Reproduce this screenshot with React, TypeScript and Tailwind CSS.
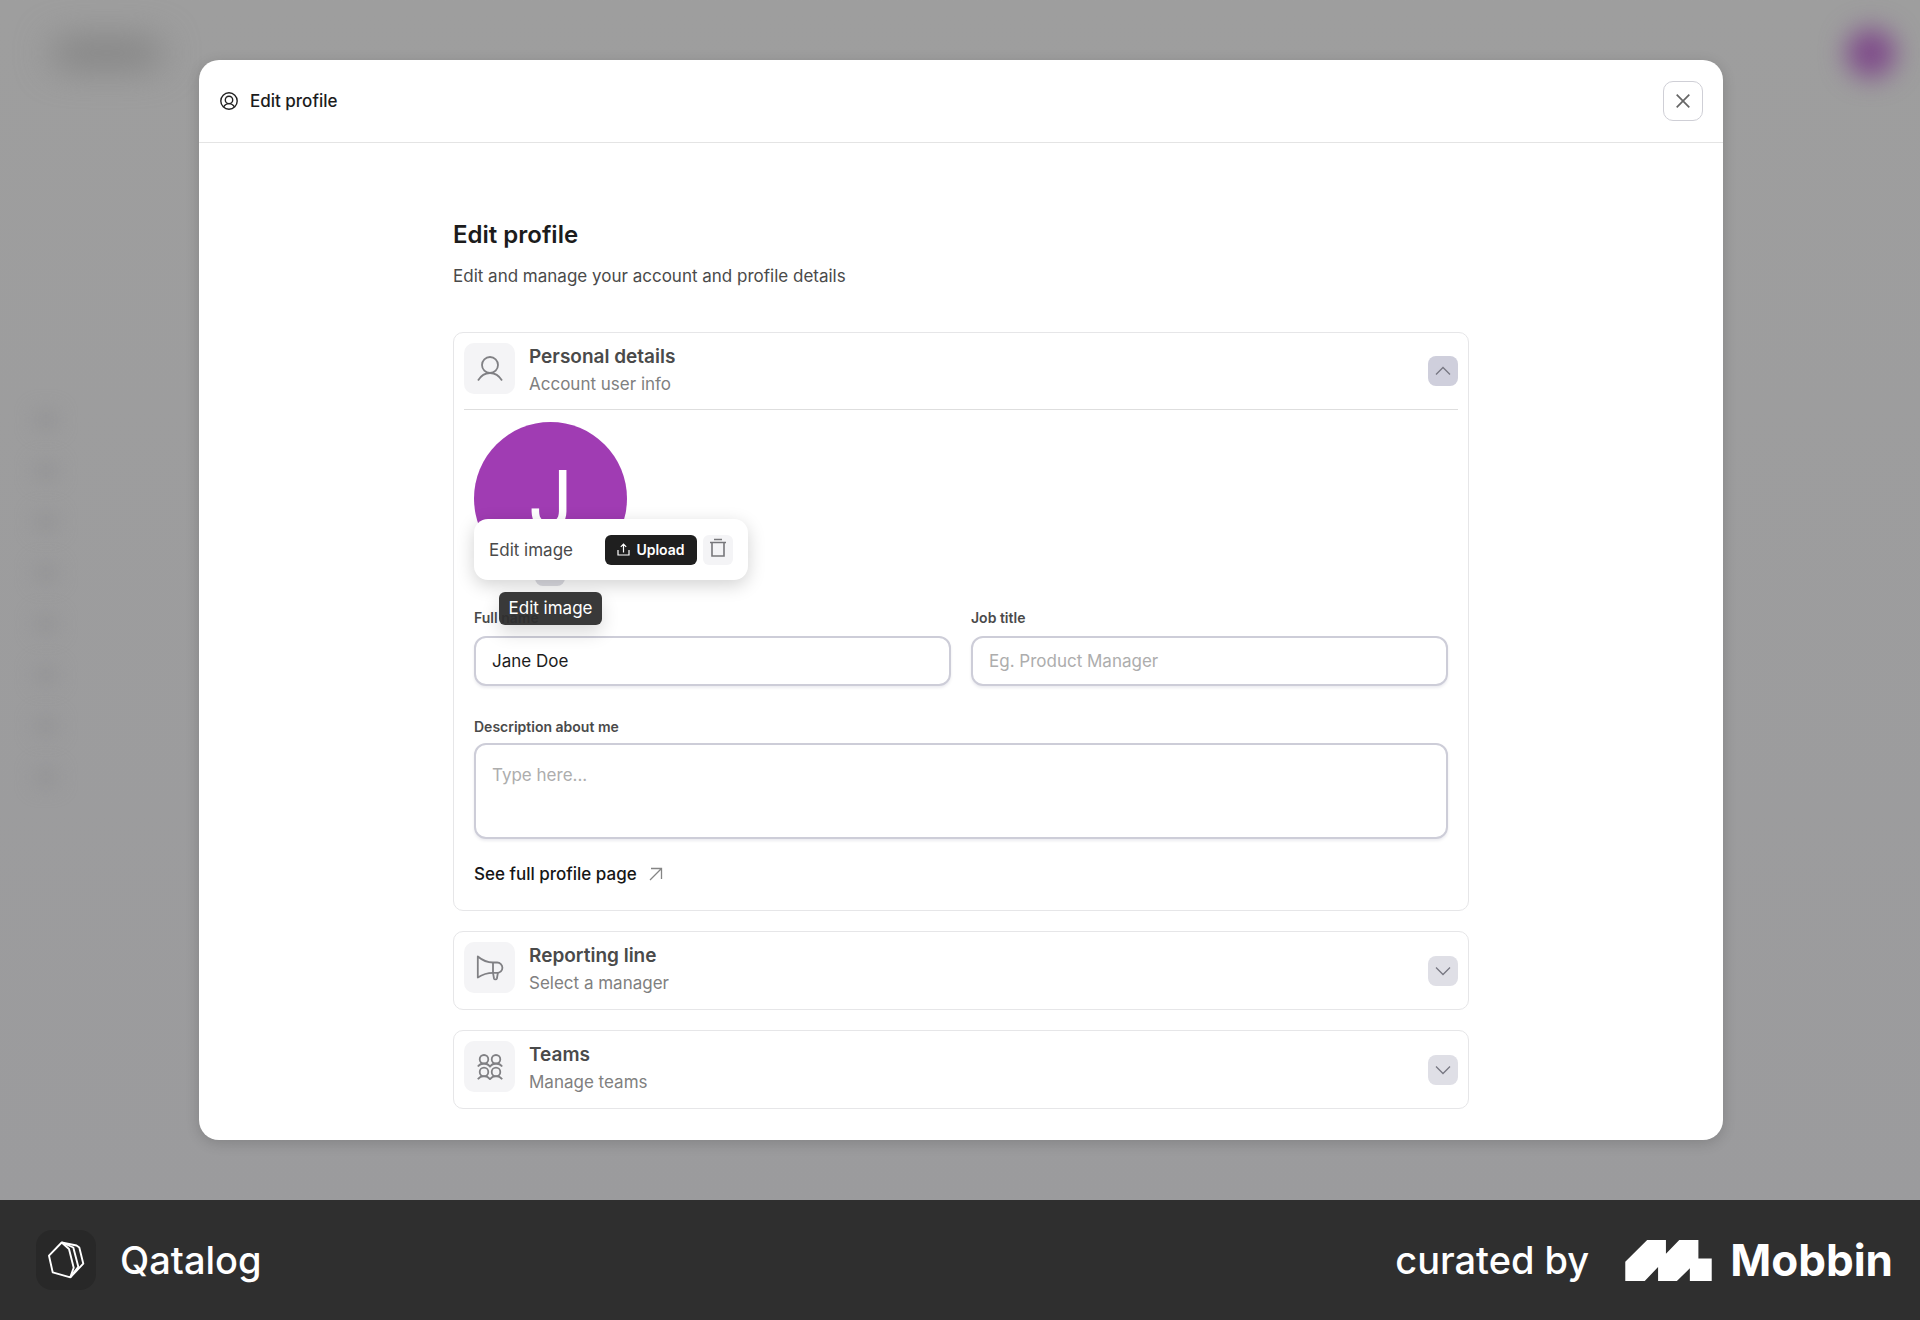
import { useState } from 'react'
import type { ReactNode } from 'react'

const navItems = ['Home', 'Search', 'Inbox', 'Work', 'People', 'Goals', 'Files', 'Settings']

function UserIcon() {
  return (
    <svg width="26" height="26" viewBox="0 0 26 26" fill="none" stroke="currentColor" strokeWidth="1.8">
      <circle cx="13" cy="9" r="8" />
      <path d="M1 24.500c3-5 7.200-7.500 12-7.500s9 2.500 12 7.500" />
    </svg>
  )
}

function MegaphoneIcon() {
  return (
    <svg width="28" height="26" viewBox="0 0 28 26" fill="none" stroke="currentColor" strokeWidth="1.8" strokeLinejoin="round">
      <path d="M1.800 1.500c5 4.200 9.800 6 15.200 6h4.200a5.200 5.200 0 0 1 0 10.400H17c-5.400 0-10.200 1.400-15.200 4.600Z" />
      <path d="M17 7.500v10.400l1 5.600c.3 1.200 2.600 1.200 2.900 0l1-5.600" />
    </svg>
  )
}

function TeamsIcon() {
  return (
    <svg width="26" height="26" viewBox="0 0 26 26" fill="none" stroke="currentColor" strokeWidth="1.8">
      <circle cx="7" cy="5.300" r="4.300" />
      <circle cx="19" cy="5.300" r="4.300" />
      <circle cx="7" cy="18" r="4.300" />
      <circle cx="19" cy="18" r="4.300" />
      <path d="M.8 12.500c1.600-2 3.700-3 6.200-3s4.500 1 6 3c1.500-2 3.500-3 6-3s4.600 1 6.200 3" />
      <path d="M.8 25.200c1.600-2 3.700-3 6.200-3s4.500 1 6 3c1.500-2 3.500-3 6-3s4.600 1 6.200 3" />
    </svg>
  )
}

function Chevron({ up }: { up?: boolean }) {
  return (
    <svg width="16" height="10" viewBox="0 0 16 10" fill="none" stroke="currentColor" strokeWidth="1.3">
      <path d={up ? 'M1 8.500 8 1.500l7 7' : 'M1 1.500l7 7 7-7'} />
    </svg>
  )
}

function Section({ icon, title, subtitle, defaultOpen = false, children }: {
  icon: ReactNode
  title: string
  subtitle: string
  defaultOpen?: boolean
  children?: ReactNode
}) {
  const [open, setOpen] = useState(defaultOpen)

  return (
    <section className="rounded-[10px] border border-[#e6e6e8] px-[10px]">
      <div className={`flex items-center justify-between h-[77px] ${open && children ? 'border-b border-[#dedede]' : ''}`}>
        <div className="flex gap-[14px] self-start pt-[10px]">
          <div className="w-[51px] h-[51px] rounded-[10px] bg-[#f4f4f6] text-[#808084] flex items-center justify-center">
            {icon}
          </div>
          <div>
            <h2 className="text-[19px] leading-7 font-semibold text-[#4a4a4a]">{title}</h2>
            <p className="text-[17px] leading-[26px] text-[#808080]">{subtitle}</p>
          </div>
        </div>
        <button
          type="button"
          aria-label={`Toggle ${title}`}
          aria-expanded={open}
          onClick={() => setOpen(!open)}
          className={`w-[30px] h-[30px] rounded-lg flex items-center justify-center text-[#777782] ${open ? 'bg-[#cfcfdc]' : 'bg-[#dfdfe6]'}`}
        >
          <Chevron up={open} />
        </button>
      </div>
      {open && children}
    </section>
  )
}

const labelClass = 'block text-[14px] leading-5 font-semibold text-[#4a4a4a]'
const fieldClass = 'block w-full rounded-xl border-2 border-[#cdcdd8] bg-white px-4 text-[17px] leading-6 text-[#1c1c1c] placeholder:text-[#adadad] shadow-[0_2px_3px_rgba(0,0,60,0.08)] outline-none'

function AvatarEditor() {
  return (
    <div className="relative w-[153px] h-[164px]">
      <div className="w-[153px] h-[153px] rounded-full bg-[#a03cb3] text-white text-[80px] flex items-center justify-center">J</div>
      <button type="button" aria-label="Change image" className="absolute bottom-0 left-[61px] w-[30px] h-[30px] rounded-lg bg-[#dcdce2]" />

      <div className="absolute left-0 top-[97px] w-[274px] h-[61px] rounded-[14px] bg-white shadow-[0_5px_18px_rgba(0,0,0,0.18)] flex items-center px-[15px]">
        <span className="text-[17px] leading-6 text-[#4a4a4a] mr-auto">Edit image</span>
        <button type="button" className="h-[30px] w-[92px] rounded-md bg-[#1f1f1f] text-white text-[14px] font-semibold flex items-center justify-center gap-[6px]">
          <svg width="13" height="13" viewBox="0 0 13 13" fill="none" stroke="currentColor" strokeWidth="1.2">
            <path d="M1 7v5h11V7M6.500 9.500V1.200M3.800 3.800l2.700-2.700 2.700 2.700" />
          </svg>
          Upload
        </button>
        <button type="button" aria-label="Delete image" className="w-[30px] h-[30px] ml-[6px] pb-1 rounded-md bg-[#f4f4f6] text-[#77777b] flex items-center justify-center">
          <svg width="18" height="20" viewBox="0 0 18 20" fill="none" stroke="currentColor" strokeWidth="1.6">
            <path d="M5 1.500h8M1 4.500h16M3 4.500v13.500h12V4.500" />
          </svg>
        </button>
      </div>

      <div role="tooltip" className="absolute left-[25px] top-[170px] w-[103px] h-[33px] rounded-md bg-[#2e2e2e]/95 text-white text-[17px] leading-[33px] text-center whitespace-nowrap shadow-[0_8px_18px_rgba(0,0,0,0.14)]">
        Edit image
      </div>
    </div>
  )
}

function PersonalDetails() {
  return (
    <div className="px-[10px] pt-3 pb-6">
      <AvatarEditor />
      <div className="grid grid-cols-2 gap-x-5 mt-[22px]">
        <div>
          <label htmlFor="name" className={labelClass}>Full name</label>
          <input id="name" defaultValue="Jane Doe" className={`${fieldClass} h-[50px] mt-2`} />
        </div>
        <div>
          <label htmlFor="job" className={labelClass}>Job title</label>
          <input id="job" placeholder="Eg. Product Manager" className={`${fieldClass} h-[50px] mt-2`} />
        </div>
      </div>
      <label htmlFor="about" className={`${labelClass} mt-[31px]`}>Description about me</label>
      <textarea id="about" placeholder="Type here..." className={`${fieldClass} h-24 mt-[6px] py-[18px] resize-none`} />
      <a href="#profile" className="mt-[23px] inline-flex items-center gap-3 text-[17px] leading-6 font-medium text-[#161616]">
        See full profile page
        <svg width="14" height="14" viewBox="0 0 14 14" fill="none" stroke="#858585" strokeWidth="1.3">
          <path d="M2 1.500h10.500V12M12.500 1.500 1 13" />
        </svg>
      </a>
    </div>
  )
}

function Backdrop() {
  return (
    <div aria-hidden="true" className="absolute inset-0 overflow-hidden bg-linear-to-b from-[#9e9e9e] to-[#9b9b9d]">
      <div className="flex justify-between px-6 pt-7">
        <div className="ml-7 mt-3 w-[110px] h-[26px] rounded-full bg-[#7f7f7f] blur-[18px]" />
        <div className="w-[50px] h-[50px] rounded-full bg-[#7f4c8a] blur-[13px]" />
      </div>
      <div className="mt-[334px] ml-9 flex flex-col gap-[35px]">
        {navItems.map(item => (
          <div key={item} className="w-5 h-4 rounded bg-[#919193] blur-[10px]" />
        ))}
      </div>
    </div>
  )
}

function Footer() {
  return (
    <footer className="h-[120px] bg-[#2f2f2f] text-white flex items-center justify-between pl-9 pr-[27px]">
      <div className="flex items-center gap-6">
        <div className="w-[60px] h-[60px] rounded-2xl bg-[#282828] flex items-center justify-center">
          <svg width="38" height="38" viewBox="0 0 38 38" fill="none" stroke="#fff" strokeWidth="1.9" strokeLinejoin="round">
            <path d="M14.700 1.500 2 14.700 5.700 31.300 23.300 36.300 26.700 26.700 22 8Z" />
            <path d="M14.700 1.500 26.300 6.500 31.300 25.700 23.300 36.300" />
            <path d="M14.700 1.500 29.500 4.500 32.300 6.500 36.300 22.700 23.300 36.300" />
          </svg>
        </div>
        <span className="text-[38px] leading-[48px] font-medium">Qatalog</span>
      </div>
      <div className="flex items-center">
        <span className="text-[38px] leading-[48px] font-medium mr-9">curated by</span>
        <svg width="87" height="41" viewBox="717 120 253 120" fill="#fff" className="mr-[18px]">
          <path d="M717 240V184L781 120H836V160L875 120H931V174H970V240H906V203L868 240H813V199L774 240Z" />
        </svg>
        <span className="text-[44px] leading-[48px] font-bold">Mobbin</span>
      </div>
    </footer>
  )
}

export default function App() {
  return (
    <div className="min-h-screen flex flex-col font-[Inter,'Liberation_Sans',sans-serif]">
      <main className="relative flex-1 flex pl-[199px] pr-[197px] py-[60px]">
        <Backdrop />
        <div role="dialog" aria-labelledby="dialog-title" className="relative flex-1 bg-white rounded-[20px] shadow-[0_3px_14px_rgba(0,0,0,0.16)]">
          <header className="h-[83px] border-b border-[#e4e4e4] flex items-center justify-between pl-[21px] pr-5">
            <div className="flex items-center gap-3">
              <svg width="18" height="18" viewBox="0 0 18 18" fill="none" stroke="#222" strokeWidth="1.4">
                <circle cx="9" cy="9" r="8.200" />
                <circle cx="9" cy="7.900" r="3.700" />
                <path d="M3.600 15c1.200-2.200 3-3.400 5.400-3.400s4.200 1.200 5.400 3.400" />
              </svg>
              <span className="text-[17px] leading-6 font-medium text-[#1c1c1c]">Edit profile</span>
            </div>
            <button type="button" aria-label="Close" className="w-10 h-10 rounded-[10px] border border-[#cfcfd6] text-[#666] flex items-center justify-center">
              <svg width="14" height="14" viewBox="0 0 14 14" fill="none" stroke="currentColor" strokeWidth="1.7">
                <path d="M.7.7l12.600 12.600M13.300.7.700 13.300" />
              </svg>
            </button>
          </header>

          <div className="mx-auto max-w-[1016px] pt-[74px] pb-[30px]">
            <h1 id="dialog-title" className="text-[24px] leading-9 font-semibold text-[#1c1c1c]">Edit profile</h1>
            <p className="mt-[11px] text-[17px] leading-6 text-[#4a4a4a]">Edit and manage your account and profile details</p>

            <div className="mt-11 space-y-5">
              <Section icon={<UserIcon />} title="Personal details" subtitle="Account user info" defaultOpen>
                <PersonalDetails />
              </Section>
              <Section icon={<MegaphoneIcon />} title="Reporting line" subtitle="Select a manager" />
              <Section icon={<TeamsIcon />} title="Teams" subtitle="Manage teams" />
            </div>
          </div>
        </div>
      </main>
      <Footer />
    </div>
  )
}
